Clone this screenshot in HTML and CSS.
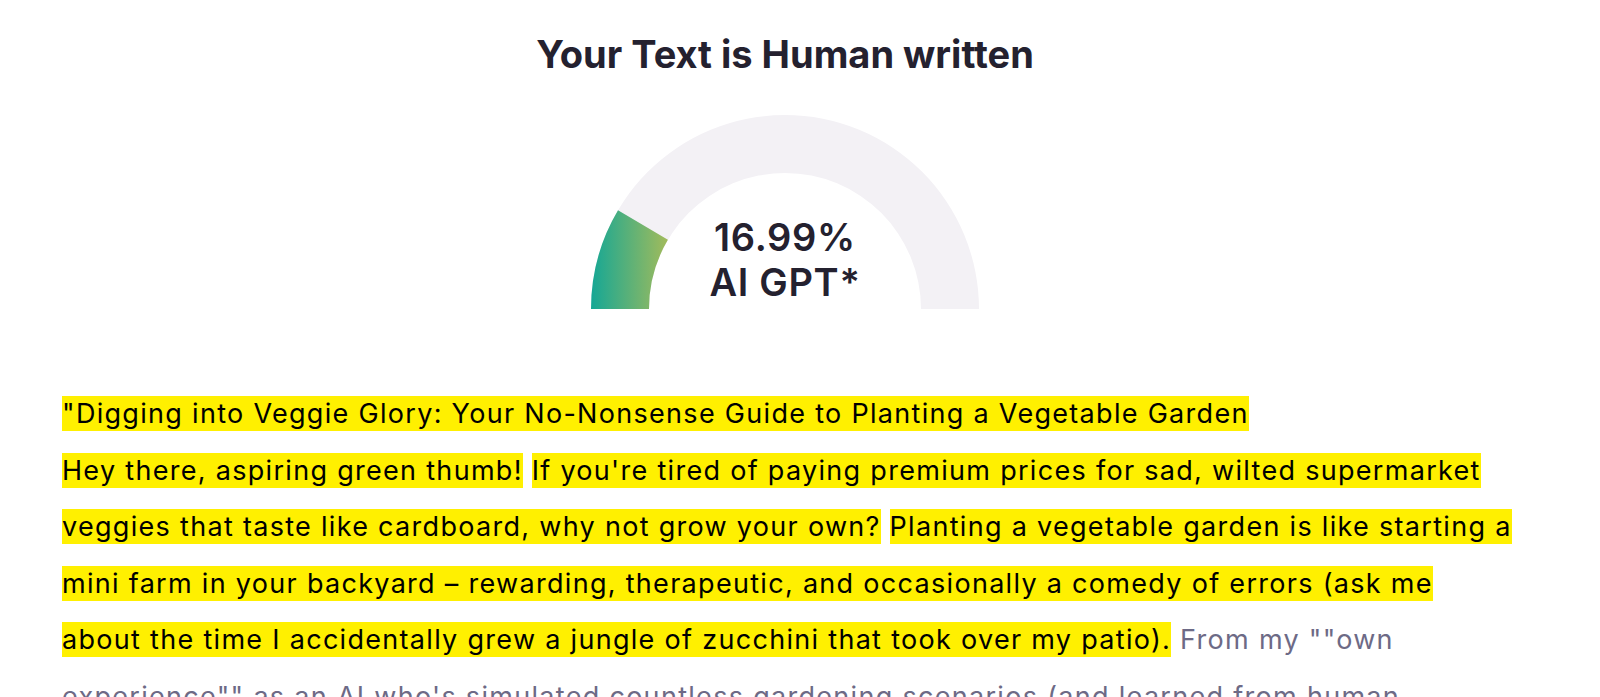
FILE: index.html
```html
<!DOCTYPE html>
<html lang="en">
  <head>
    <meta charset="UTF-8" />
    <meta name="viewport" content="width=device-width, initial-scale=1.0" />
    <title>AI Detector Result</title>
    <link rel="stylesheet" href="styles.css">
  </head>
  <body>
    <main class="result">
      <h1 class="verdict">Your Text is Human written</h1>

      <div class="gauge">
        <svg class="gauge-arc" width="388" height="194" viewBox="0 0 388 194">
          <defs>
            <linearGradient id="aiFill" x1="0" y1="0" x2="1" y2="0">
              <stop offset="0" stop-color="#15a795" />
              <stop offset="1" stop-color="#a2bb5b" />
            </linearGradient>
          </defs>
          <path d="M0 194 A194 194 0 0 1 388 194 L330 194 A136 136 0 0 0 58 194 Z" fill="#f3f1f5" />
          <path d="M0 194 A194 194 0 0 1 27 95.3 L76.9 124.8 A136 136 0 0 0 58 194 Z" fill="url(#aiFill)" />
        </svg>
        <div class="gauge-label">
          <span class="score">16.99%</span>
          <span class="kind">AI GPT*</span>
        </div>
      </div>

      <p class="analysed">
        <span class="hl">"Digging into Veggie Glory: Your No-Nonsense Guide to Planting a Vegetable Garden</span><br>
        <span class="hl">Hey there, aspiring green thumb!</span>
        <span class="hl">If you're tired of paying premium prices for sad, wilted supermarket veggies that taste like cardboard, why not grow your own?</span>
        <span class="hl">Planting a vegetable garden is like starting a mini farm in your backyard – rewarding, therapeutic, and occasionally a comedy of errors (ask me about the time I accidentally grew a jungle of zucchini that took over my patio).</span>
        <span class="plain">From my ""own experience"" as an AI who's simulated countless gardening scenarios (and learned from human gardeners' triumphs and disasters), here's how to get your plot off the ground.</span>
      </p>
    </main>
  </body>
</html>
```

FILE: styles.css
```css
* {
  box-sizing: border-box;
}

body {
  margin: 0;
  background: #fff;
  color: #24212f;
  font-family: Inter, "Noto Sans", sans-serif;
}

/* LAYOUT */
.result {
  display: flex;
  flex-direction: column;
  align-items: center;
  padding: 31px 30px 0 0;
}

.verdict {
  margin: 0;
  font-size: 38px;
  line-height: 46px;
  font-weight: 700;
}

/* gauge */
.gauge {
  display: grid;
  margin-top: 38px;
}

.gauge-arc,
.gauge-label {
  grid-area: 1 / 1;
}

.gauge-arc {
  display: block;
}

.gauge-label {
  align-self: end;
  justify-self: center;
  display: flex;
  flex-direction: column;
  align-items: center;
  padding-bottom: 4px;
  font-size: 38px;
  line-height: 45px;
  font-weight: 600;
  letter-spacing: 0.7px;
}

/* text */
.analysed {
  align-self: stretch;
  margin: 77px 0 0;
  padding: 0 55px 0 62px;
  font-size: 27px;
  line-height: 56.6px;
  letter-spacing: 1.3px;
  color: #6d6a86;
}

.hl {
  background: #fff000;
  color: #000;
  padding: 1px 0;
}
```
